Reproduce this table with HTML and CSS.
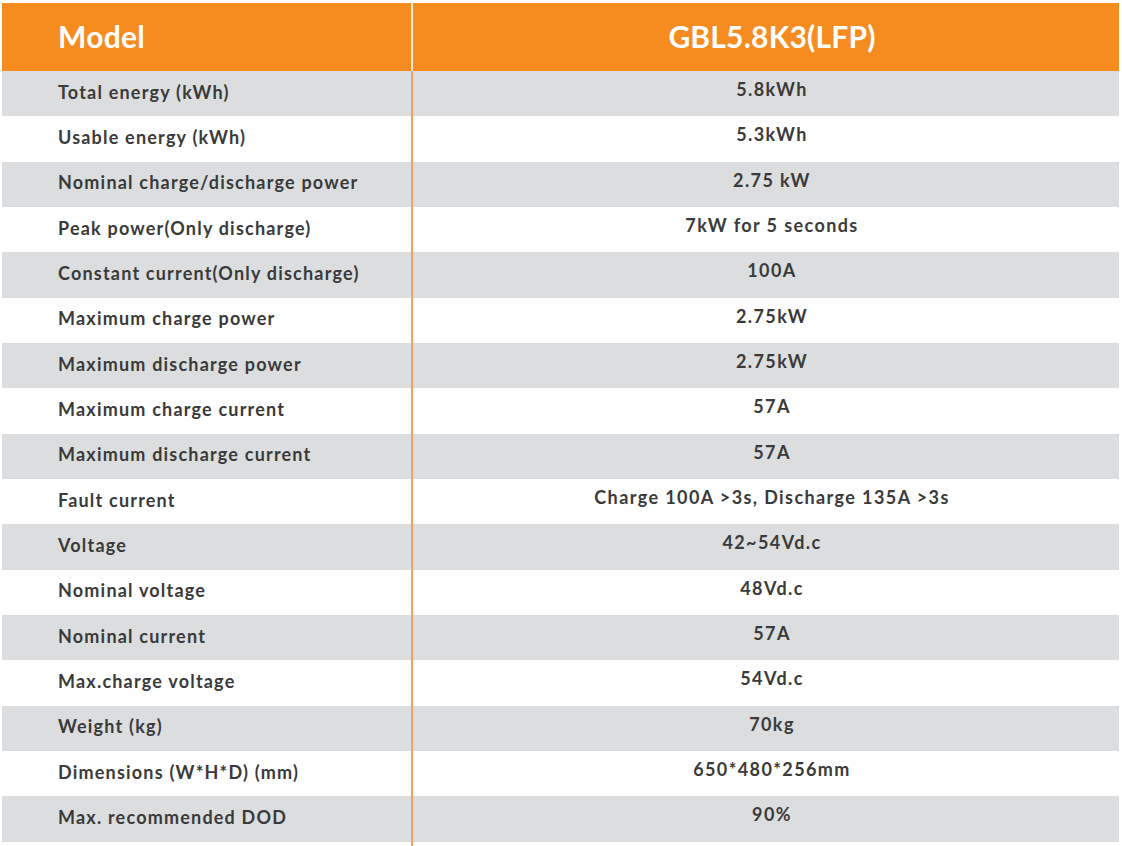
FILE: index.html
```html
<!DOCTYPE html>
<html>
<head>
<meta charset="utf-8">
<link rel="stylesheet" href="styles.css">
</head>
<body>
<div class="sheet">
  <div class="row head">
    <div class="cell label">Model</div>
    <div class="cell value">GBL5.8K3(LFP)</div>
  </div>
  <div class="row grey"><div class="cell label">Total energy (kWh)</div><div class="cell value">5.8kWh</div></div>
  <div class="row"><div class="cell label">Usable energy (kWh)</div><div class="cell value">5.3kWh</div></div>
  <div class="row grey"><div class="cell label">Nominal charge/discharge power</div><div class="cell value">2.75 kW</div></div>
  <div class="row"><div class="cell label">Peak power(Only discharge)</div><div class="cell value">7kW for 5 seconds</div></div>
  <div class="row grey"><div class="cell label">Constant current(Only discharge)</div><div class="cell value">100A</div></div>
  <div class="row"><div class="cell label">Maximum charge power</div><div class="cell value">2.75kW</div></div>
  <div class="row grey"><div class="cell label">Maximum discharge power</div><div class="cell value">2.75kW</div></div>
  <div class="row"><div class="cell label">Maximum charge current</div><div class="cell value">57A</div></div>
  <div class="row grey"><div class="cell label">Maximum discharge current</div><div class="cell value">57A</div></div>
  <div class="row"><div class="cell label">Fault current</div><div class="cell value">Charge 100A &gt;3s, Discharge 135A &gt;3s</div></div>
  <div class="row grey"><div class="cell label">Voltage</div><div class="cell value">42~54Vd.c</div></div>
  <div class="row"><div class="cell label">Nominal voltage</div><div class="cell value">48Vd.c</div></div>
  <div class="row grey"><div class="cell label">Nominal current</div><div class="cell value">57A</div></div>
  <div class="row"><div class="cell label">Max.charge voltage</div><div class="cell value">54Vd.c</div></div>
  <div class="row grey"><div class="cell label">Weight (kg)</div><div class="cell value">70kg</div></div>
  <div class="row"><div class="cell label">Dimensions (W*H*D) (mm)</div><div class="cell value">650*480*256mm</div></div>
  <div class="row grey"><div class="cell label">Max. recommended DOD</div><div class="cell value">90%</div></div>
  <div class="row tail"><div class="cell label"></div><div class="cell value"></div></div>
</div>
</body>
</html>
```

FILE: styles.css
```css
html, body {
  margin: 0;
  padding: 0;
  background: #ffffff;
}
body {
  font-family: Lato, "Open Sans", "DejaVu Sans", sans-serif;
  color: #3a3a3a;
}
.sheet {
  padding: 3px 3px 0 2px;
  display: flex;
  flex-direction: column;
}
.row {
  display: grid;
  grid-template-columns: 409px 1fr;
  height: 45.33px;
}
.row.head {
  height: 68px;
  background: #f68c20;
  color: #ffffff;
}
.row.grey {
  background: #dcddde;
}
.row.tail {
  height: 4px;
}
.cell {
  display: flex;
  align-items: center;
  box-sizing: border-box;
  font-weight: 700;
  font-size: 18px;
  letter-spacing: 1.2px;
}
.label {
  padding-left: 56px;
  padding-bottom: 4px;
}
.value {
  justify-content: center;
  border-left: 2px solid #f3a261;
  padding-left: 12px;
  padding-bottom: 9px;
  letter-spacing: 1.4px;
}
.head .label,
.head .value {
  padding-bottom: 3px;
}
.head .value {
  border-left-color: #fde9d6;
  font-size: 30px;
  letter-spacing: 0.2px;
}
.head .label {
  font-size: 30px;
  letter-spacing: 0.3px;
}
.tail .label,
.tail .value {
  padding: 0;
}
```
